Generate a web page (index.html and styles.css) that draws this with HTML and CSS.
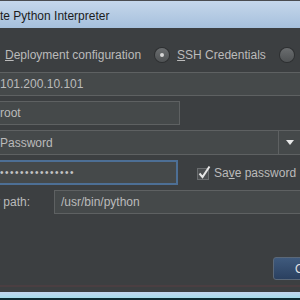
FILE: index.html
```html
<!DOCTYPE html>
<html>
<head>
    <meta charset="UTF-8">
    <meta name="viewport" content="width=device-width, initial-scale=1.0">
    <title>Create Python Interpreter</title>

    <link rel="stylesheet" href="styles.css">
</head>

<body>

    <div class="window">
        <div class="frame">

            <div class="titlebar">
                <span class="title">Create Python Interpreter</span>
            </div>

            <div class="dialog">
                <!-- interpreter source -->
                <div class="radio-row">
                    <label class="radio-item"><span class="radio"></span><span><u>D</u>eployment configuration</span></label>
                    <label class="radio-item"><span class="radio checked"></span><span><u>S</u>SH Credentials</span></label>
                    <label class="radio-item"><span class="radio"></span><span><u>V</u>agrant</span></label>
                </div>

                <div class="form">
                    <span class="label">Host:</span>
                    <div class="field">101.200.10.101</div>

                    <span class="label">User name:</span>
                    <div class="field field-short">root</div>

                    <span class="label">Auth type:</span>
                    <div class="field combo">
                        <span class="combo-text">Password</span>
                        <span class="combo-arrow"></span>
                    </div>

                    <span class="label">Password:</span>
                    <div class="password-row">
                        <div class="field field-password focused"><span class="dots">&bull;&bull;&bull;&bull;&bull;&bull;&bull;&bull;&bull;&bull;&bull;&bull;&bull;&bull;&bull;</span></div>
                        <label class="check-item">
                            <svg class="checkbox" width="16" height="16" viewBox="0 0 16 16">
                                <rect x="1.5" y="3.5" width="11" height="11" fill="#4b4e50" stroke="#6a6d6f"/>
                                <path d="M3.5 8.5 L6.5 12 L13.5 1.5" fill="none" stroke="#e6e6e6" stroke-width="2"/>
                            </svg>
                            <span>Sa<u>v</u>e password</span>
                        </label>
                    </div>
                </div>

                <div class="path-row">
                    <span class="path-label"><span>Python interpreter path:</span></span>
                    <div class="field field-path">/usr/bin/python</div>
                </div>

                <div class="footer">
                    <button class="btn">OK</button>
                    <button class="btn">Cancel</button>
                </div>
            </div>

            <div class="edge-line"></div>
            <div class="taskbar"></div>
        </div>
    </div>

</body>

</html>
```

FILE: styles.css
```css
body {
    margin: 0;
    padding: 0;
    font-family: 'Liberation Sans', Arial, sans-serif;
    font-size: 12px;
    background-color: #3c3f41;
}

.window {
    width: 300px;
    height: 300px;
    overflow: hidden;
    background-color: #3c3f41;
}

/* the dialog is wider than the shot, so the frame starts left of the view */
.frame {
    width: 460px;
    margin-left: -140px;
}

.titlebar {
    height: 27px;
    border-top: 1px solid #4a4c50;
    background: linear-gradient(#c5d7eb, #a6c0dc);
    display: flex;
    align-items: center;
    padding-left: 114px;
    padding-top: 3px;
    box-sizing: border-box;
    height: 28px;
}

.title {
    color: #1c1c1c;
    font-size: 12px;
}

.dialog {
    box-sizing: border-box;
    padding: 15px 19px 0 43px;
    color: #bbbbbb;
    height: 257px;
}

.radio-row {
    display: flex;
    align-items: center;
    gap: 14px;
    height: 24px;
    margin-left: 80px;
    white-space: nowrap;
}

.radio-item {
    display: flex;
    align-items: center;
    gap: 8px;
}

.radio {
    width: 14px;
    height: 14px;
    border-radius: 50%;
    background: linear-gradient(#6a6d6f, #4f5254);
    box-shadow: 0 0 0 1px rgba(0, 0, 0, 0.25);
    display: flex;
    align-items: center;
    justify-content: center;
    flex-shrink: 0;
}

.radio.checked::after {
    content: '';
    width: 4px;
    height: 4px;
    border-radius: 50%;
    background-color: #d6d6d6;
}

.form {
    display: grid;
    grid-template-columns: 87px 1fr;
    row-gap: 5px;
    margin-top: 5px;
    align-items: center;
}

.label {
    white-space: nowrap;
}

.field {
    box-sizing: border-box;
    height: 24px;
    background-color: #45494a;
    border: 1px solid #5e6162;
    display: flex;
    align-items: center;
    padding-left: 9px;
    white-space: nowrap;
}

.field-short {
    width: 190px;
}

.combo {
    height: 25px;
    padding-right: 0;
    justify-content: space-between;
}

.combo-arrow {
    width: 21px;
    height: 100%;
    border-left: 1px solid #5e6162;
    display: flex;
    align-items: center;
    justify-content: center;
}

.combo-arrow::after {
    content: '';
    border-left: 4px solid transparent;
    border-right: 4px solid transparent;
    border-top: 5px solid #e8e8e8;
}

.password-row {
    display: flex;
    align-items: center;
    gap: 18px;
}

.field-password {
    width: 188px;
    height: 25px;
}

.focused {
    border: 2px solid #4d6f95;
    padding-left: 8px;
}

.dots {
    font-size: 10px;
    letter-spacing: 1.5px;
    color: #c4c4c4;
}

.check-item {
    display: flex;
    align-items: center;
    gap: 2px;
    white-space: nowrap;
}

.path-row {
    display: flex;
    align-items: center;
    margin-top: 5px;
}

.path-label {
    flex: 0 0 127px;
    display: flex;
    justify-content: flex-end;
    white-space: nowrap;
}

.field-path {
    flex: 1;
    margin-left: 24px;
    padding-left: 6px;
}

.footer {
    display: flex;
    gap: 6px;
    margin-top: 43px;
    padding-left: 370px;
}

.btn {
    height: 23px;
    padding: 0 21px;
    border: 1px solid #5b6878;
    border-radius: 3px;
    background: linear-gradient(#3f5a7d, #2a4060);
    color: #e2e2e2;
    font-family: 'Liberation Sans', Arial, sans-serif;
    font-size: 12px;
    flex-shrink: 0;
}

.edge-line {
    height: 2px;
    background-color: #4a3e41;
    margin-bottom: 5px;
}

.taskbar {
    height: 6px;
    background: linear-gradient(#c3d6ee, #a6dbea);
    border-bottom: 2px solid #0e2a32;
}
```
